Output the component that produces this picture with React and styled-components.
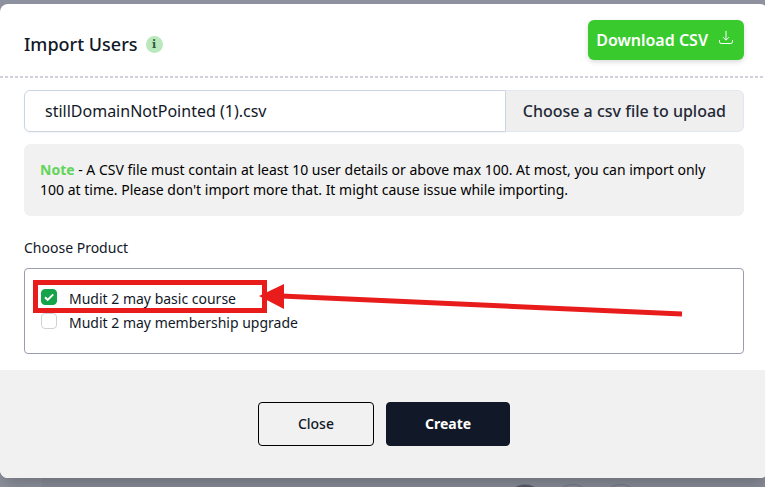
import React, { useState } from 'react';
import styled, { createGlobalStyle } from 'styled-components';

const GlobalStyle = createGlobalStyle`
  *, *::before, *::after {
    box-sizing: border-box;
  }

  body {
    margin: 0;
    background: #8e929f;
    color: #111827;
    font-family: 'Noto Sans', sans-serif;
    font-size: 14px;
    line-height: 20px;
  }

  button, input {
    font-family: inherit;
  }
`;

const Page = styled.div`
  height: 100vh;
  padding-top: 4px;
  overflow: hidden;
  background: linear-gradient(to right, #8e929d 42px, #898d98 42px);
`;

const TopBackdrop = styled.div`
  background: #8e929f;
  margin-top: -4px;
  padding-top: 4px;
`;

const Modal = styled.div`
  /* slides slightly past the right edge of the window */
  margin-right: -3px;
  background: #ffffff;
  border-radius: 8px;
  overflow: hidden;
  box-shadow: 0 10px 15px -3px rgba(0, 0, 0, 0.2);
`;

const Header = styled.header`
  display: flex;
  align-items: center;
  justify-content: space-between;
  padding: 16px 24px 18px;
  background: repeating-linear-gradient(to right, #d1d1db 0 3px, transparent 3px 5px) bottom / 100% 2px no-repeat;
`;

const Title = styled.h1`
  display: flex;
  align-items: center;
  gap: 8px;
  margin: 0;
  padding-top: 8px;
  font-size: 18px;
  font-weight: 500;
  line-height: 24px;
`;

const InfoBadge = styled.span`
  display: flex;
  align-items: center;
  justify-content: center;
  width: 17px;
  height: 17px;
  border-radius: 50%;
  background: #b8e8bb;
  color: #30583a;
  font-family: 'DejaVu Serif', serif;
  font-size: 11px;
  font-weight: 700;
  line-height: 17px;
`;

const DownloadButton = styled.button`
  display: flex;
  align-items: center;
  gap: 10px;
  height: 40px;
  padding: 0 10px 0 8px;
  border: 0;
  border-radius: 6px;
  background: #39cb2e;
  color: #ffffff;
  font-size: 16px;
  font-weight: 600;
  line-height: 24px;
  box-shadow: 0 2px 5px rgba(0, 0, 0, 0.15);
  cursor: pointer;

  svg {
    margin-bottom: 4px;
  }
`;

const Body = styled.div`
  padding: 12px 24px 16px;
`;

const FileRow = styled.div`
  display: flex;
  height: 42px;
`;

const FileName = styled.input`
  flex: 1;
  min-width: 0;
  padding: 0 20px;
  border: 1px solid #cbd5e1;
  border-radius: 6px 0 0 6px;
  background: #ffffff;
  color: #111827;
  font-size: 16px;
  box-shadow: 0 1px 2px rgba(0, 0, 0, 0.05);
  outline: 0;
`;

const FileButton = styled.button`
  padding: 0 17px;
  border: 1px solid #e2e8f0;
  border-left: 0;
  border-radius: 0 6px 6px 0;
  background: #efefef;
  color: #1f2937;
  font-size: 16px;
  font-weight: 500;
  cursor: pointer;
`;

const Note = styled.p`
  margin: 12px 0 0;
  padding: 16px;
  border-radius: 6px;
  background: #f1f1f1;
  color: #000000;
`;

const NoteLabel = styled.strong`
  color: #62d45a;
  font-weight: 700;
`;

const Products = styled.fieldset`
  min-width: 0;
  margin: 0;
  padding: 0;
  border: 0;
`;

const ProductsLegend = styled.legend`
  padding: 22px 0 10px;
`;

const ProductList = styled.div`
  position: relative;
  padding: 16px 16px 20px;
  border: 1px solid #9a9eac;
  border-radius: 4px;
`;

const ProductLabel = styled.label`
  display: flex;
  gap: 12px;
  padding: 4px 0 0;
  line-height: 20px;
`;

const Checkbox = styled.input`
  appearance: none;
  flex: none;
  width: 16px;
  height: 16px;
  margin: 0;
  border: 1px solid #d1d1db;
  border-radius: 4px;
  background: #ffffff;

  &:checked {
    border-color: #16a34a;
    background: #16a34a;
  }
`;

const CheckHolder = styled.span`
  display: grid;
  height: 16px;

  > * {
    grid-area: 1 / 1;
  }

  svg {
    pointer-events: none;
  }
`;

const Annotation = styled.svg`
  position: absolute;
  left: 8px;
  top: 10px;
  overflow: visible;
  pointer-events: none;
`;

const Footer = styled.footer`
  display: flex;
  justify-content: center;
  gap: 12px;
  padding: 32px 24px;
  background: #f1f1f1;
`;

const FooterButton = styled.button`
  height: 44px;
  padding: 0 ${(props) => (props.$primary ? 38 : 39)}px 2px;
  border: 1px solid ${(props) => (props.$primary ? '#111827' : '#000000')};
  border-radius: 4px;
  background: ${(props) => (props.$primary ? '#111827' : 'transparent')};
  color: ${(props) => (props.$primary ? '#ffffff' : '#111827')};
  font-size: 14px;
  font-weight: ${(props) => (props.$primary ? 700 : 500)};
  cursor: pointer;
`;

const Pager = styled.div`
  display: flex;
  justify-content: flex-end;
  gap: 8px;
  padding: 6px 124px 0 0;
`;

const PagerDot = styled.span`
  flex: none;
  width: 40px;
  height: 40px;
  border: 1px solid #696d7a;
  border-radius: 50%;
  background: ${(props) => (props.$active ? '#4d515e' : 'transparent')};
`;

const productNames = ['Mudit 2 may basic course', 'Mudit 2 may membership upgrade'];

const DownloadIcon = () => (
  <svg width="16" height="16" viewBox="0 0 16 16" fill="none" stroke="currentColor" aria-hidden="true">
    <path d="M8 1v9M5 7.2l3 3 3-3M1.5 10v1.8q0 1.7 1.7 1.7h9.6q1.7 0 1.7-1.7V10" />
  </svg>
);

const CheckIcon = () => (
  <svg width="16" height="16" viewBox="0 0 16 16" fill="none" stroke="#ffffff" strokeWidth="2" aria-hidden="true">
    <path d="M4 8.2l2.7 2.7L12.2 5.4" />
  </svg>
);

const App = () => {
  const [selected, setSelected] = useState([productNames[0]]);

  const toggle = (name) => {
    setSelected((current) =>
      current.includes(name) ? current.filter((item) => item !== name) : [...current, name]
    );
  };

  return (
    <Page>
      <GlobalStyle />
      <TopBackdrop>
        <Modal role="dialog" aria-labelledby="import-title">
          <Header>
            <Title id="import-title">
              Import Users
              <InfoBadge>i</InfoBadge>
            </Title>
            <DownloadButton type="button">
              Download CSV
              <DownloadIcon />
            </DownloadButton>
          </Header>
          <Body>
            <FileRow>
              <FileName
                type="text"
                aria-label="CSV file"
                value="stillDomainNotPointed (1).csv"
                readOnly
              />
              <FileButton type="button">Choose a csv file to upload</FileButton>
            </FileRow>
            <Note>
              <NoteLabel>Note</NoteLabel> - A CSV file must contain at least 10 user details or above
              max 100. At most, you can import only 100 at time. Please don't import more that. It
              might cause issue while importing.
            </Note>
            <Products>
              <ProductsLegend>Choose Product</ProductsLegend>
              <ProductList>
                {productNames.map((name) => (
                  <ProductLabel key={name}>
                    <CheckHolder>
                      <Checkbox
                        type="checkbox"
                        checked={selected.includes(name)}
                        onChange={() => toggle(name)}
                      />
                      {selected.includes(name) && <CheckIcon />}
                    </CheckHolder>
                    {name}
                  </ProductLabel>
                ))}
                <Annotation width="650" height="40" viewBox="0 0 650 40" aria-hidden="true">
                  <rect x="2.5" y="3.5" width="229" height="28" fill="none" stroke="#e91c1c" strokeWidth="5" />
                  <path d="M248 17L649 35" stroke="#e91c1c" strokeWidth="5" />
                  <path d="M226 17L251 5V30Z" fill="#e91c1c" />
                </Annotation>
              </ProductList>
            </Products>
          </Body>
          <Footer>
            <FooterButton type="button">Close</FooterButton>
            <FooterButton type="button" $primary>
              Create
            </FooterButton>
          </Footer>
        </Modal>
      </TopBackdrop>
      <Pager>
        <PagerDot $active />
        <PagerDot />
        <PagerDot />
      </Pager>
    </Page>
  );
};

export default App;
